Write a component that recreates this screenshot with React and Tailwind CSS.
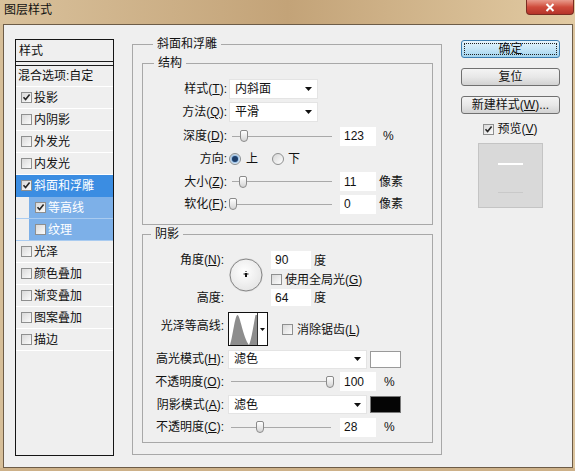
import React from 'react';

function U({ children }) {
  return <span className="underline underline-offset-[1px]">{children}</span>;
}

function Check({ checked }) {
  return (
    <span className="flex h-[11px] w-[11px] shrink-0 items-center justify-center border border-[#8e8f8f] bg-linear-to-br from-[#d9d9d9] to-[#fbfbfb]">
      {checked && (
        <svg width="9" height="9" viewBox="0 0 9 9">
          <path d="M1.5 4.3 L3.6 6.6 L7.6 1.6" fill="none" stroke="#262626" strokeWidth="1.6" />
        </svg>
      )}
    </span>
  );
}

function Radio({ checked }) {
  return (
    <span className="flex h-[12px] w-[12px] shrink-0 items-center justify-center rounded-full border border-[#8e8f8f] bg-linear-to-br from-[#d6d6d6] to-white">
      {checked && <span className="h-[6px] w-[6px] rounded-full bg-[#1f3f6a] shadow-[0_0_2px_1px_#78b0e6]" />}
    </span>
  );
}

function Arrow() {
  return (
    <svg width="7" height="4" viewBox="0 0 7 4">
      <path d="M0 0 H7 L3.5 4 Z" fill="#111" />
    </svg>
  );
}

function Select({ value, className }) {
  return (
    <div className={`flex items-center justify-between border border-[#e4e4e4] bg-white pl-[5px] pr-[5px] ${className}`}>
      <span>{value}</span>
      <Arrow />
    </div>
  );
}

function Slider({ left }) {
  return (
    <div className="relative flex h-[12px] w-[107px] shrink-0 items-center">
      <div className="ml-[3px] h-px w-[100px] bg-[#a9a9a9]" />
      <div
        className="absolute top-0 h-[12px] w-[8px] rounded-t-[2px] rounded-b-[4px] border border-[#8a8a8a] bg-linear-to-b from-white to-[#d4d4d4]"
        style={{ left }}
      />
    </div>
  );
}

function Field({ value, className }) {
  return <div className={`flex items-center bg-white pl-[4px] ${className}`}>{value}</div>;
}

const effects = [
  { name: '投影', checked: true },
  { name: '内阴影' },
  { name: '外发光' },
  { name: '内发光' },
  { name: '斜面和浮雕', checked: true, selected: true },
  { name: '等高线', checked: true, sub: true },
  { name: '纹理', sub: true },
  { name: '光泽' },
  { name: '颜色叠加' },
  { name: '渐变叠加' },
  { name: '图案叠加' },
  { name: '描边' },
];

function EffectList() {
  return (
    <div className="ml-[11px] mt-[14px] flex h-[417px] w-[99px] shrink-0 flex-col border border-[#141414]">
      <div className="flex h-[22px] items-center border-b border-[#1c1c1c] pl-[3px]">样式</div>
      <div className="h-[3px]" />
      <div className="flex h-[22px] items-center border-t border-b border-t-[#1c1c1c] border-b-white pl-[2px]">混合选项:自定</div>
      {effects.map((e) =>
        e.sub ? (
          <div key={e.name} className="flex h-[22px] border-b border-[#a9cbf0] pl-[13px]">
            <div className="flex flex-1 items-center gap-[2px] bg-[#7db0e8] pl-[6px] text-white">
              <Check checked={e.checked} />
              {e.name}
            </div>
          </div>
        ) : (
          <div
            key={e.name}
            className={`flex h-[22px] items-center gap-[2px] border-b pl-[5px] ${
              e.selected ? 'border-[#3b8de2] bg-[#3b8de2] text-white' : 'border-white'
            }`}
          >
            <Check checked={e.checked} />
            {e.name}
          </div>
        )
      )}
    </div>
  );
}

function Structure() {
  return (
    <fieldset className="border border-[#a8a8a8] pb-[9px] pt-[7px]">
      <legend className="ml-[11px] px-[4px] leading-[14px]">结构</legend>
      <div className="flex h-[23px] items-center">
        <div className="w-[84px] text-right">样式(<U>T</U>):</div>
        <Select value="内斜面" className="ml-[2px] h-[20px] w-[89px]" />
      </div>
      <div className="flex h-[24px] items-center">
        <div className="w-[84px] text-right">方法(<U>Q</U>):</div>
        <Select value="平滑" className="ml-[2px] h-[20px] w-[89px]" />
      </div>
      <div className="flex h-[24px] items-center">
        <div className="w-[84px] text-right">深度(<U>D</U>):</div>
        <div className="ml-[2px]"><Slider left={11} /></div>
        <Field value="123" className="ml-[4px] h-[19px] w-[36px]" />
        <span className="ml-[7px]">%</span>
      </div>
      <div className="flex h-[22px] items-center">
        <div className="w-[84px] text-right">方向:</div>
        <div className="ml-[2px] flex items-center">
          <Radio checked />
          <span className="ml-[5px]">上</span>
          <span className="ml-[14px]"><Radio /></span>
          <span className="ml-[4px]">下</span>
        </div>
      </div>
      <div className="flex h-[23px] items-center">
        <div className="w-[84px] text-right">大小(<U>Z</U>):</div>
        <div className="ml-[2px]"><Slider left={10} /></div>
        <Field value="11" className="ml-[4px] h-[19px] w-[36px]" />
        <span className="ml-[3px]">像素</span>
      </div>
      <div className="flex h-[22px] items-center">
        <div className="w-[84px] text-right">软化(<U>F</U>):</div>
        <div className="ml-[2px]"><Slider left={0} /></div>
        <Field value="0" className="ml-[4px] h-[19px] w-[36px]" />
        <span className="ml-[3px]">像素</span>
      </div>
    </fieldset>
  );
}

function AngleDial() {
  return (
    <svg width="36" height="36" viewBox="0 0 36 36">
      <defs>
        <radialGradient id="dial" cx="0.45" cy="0.4" r="0.6">
          <stop offset="0" stopColor="#ffffff" />
          <stop offset="1" stopColor="#e6e6e6" />
        </radialGradient>
      </defs>
      <circle cx="18" cy="18" r="17" fill="#d8d8d8" opacity="0.5" />
      <circle cx="18" cy="18" r="16" fill="url(#dial)" stroke="#858585" strokeWidth="1" />
      <rect x="17.5" y="14" width="1" height="1" fill="#111" />
      <rect x="15.5" y="16.5" width="5" height="1" fill="#111" />
      <rect x="17" y="16" width="2" height="4" fill="#111" />
    </svg>
  );
}

function ContourThumb() {
  return (
    <svg width="40" height="34" viewBox="0 0 40 34">
      <rect x="0.5" y="0.5" width="39" height="33" fill="#fff" stroke="#111" />
      <path d="M2 33 C5 24 7 3 9.5 3 C12 3 15 25 21 33 Z" fill="#8d8d8d" />
      <path d="M21 33 C23.5 28 26 10 27.5 3 L29 3 L29 33 Z" fill="#8d8d8d" />
      <line x1="29.5" y1="1" x2="29.5" y2="33" stroke="#333" />
      <path d="M32 16 H37 L34.5 19 Z" fill="#111" />
    </svg>
  );
}

function Shadow() {
  return (
    <fieldset className="mt-[2px] border border-[#a8a8a8] pb-[4px] pt-[10px]">
      <legend className="ml-[8px] px-[4px] leading-[14px]">阴影</legend>
      <div className="flex">
        <div className="flex w-[81px] flex-col justify-between text-right">
          <div className="leading-[19px]">角度(<U>N</U>):</div>
          <div className="leading-[18px]">高度:</div>
        </div>
        <div className="ml-[4px] mt-[6px]">
          <AngleDial />
        </div>
        <div className="ml-[7px] flex flex-col">
          <div className="flex h-[19px] items-center">
            <Field value="90" className="h-[18px] w-[40px] self-start" />
            <span className="ml-[3px]">度</span>
          </div>
          <div className="flex h-[19px] items-center gap-[3px]">
            <Check />
            <span>使用全局光(<U>G</U>)</span>
          </div>
          <div className="flex h-[18px] items-center">
            <Field value="64" className="h-[17px] w-[40px] self-start" />
            <span className="ml-[3px]">度</span>
          </div>
        </div>
      </div>
      <div className="mt-[5px] flex h-[34px]">
        <div className="w-[81px] pt-[7px] text-right">光泽等高线:</div>
        <div className="ml-[4px]">
          <ContourThumb />
        </div>
        <div className="ml-[14px] flex items-center gap-[4px] pt-[1px]">
          <Check />
          <span>消除锯齿(<U>L</U>)</span>
        </div>
      </div>
      <div className="mt-[2px] flex h-[22px] items-center">
        <div className="w-[81px] text-right">高光模式(<U>H</U>):</div>
        <Select value="滤色" className="ml-[4px] h-[19px] w-[139px]" />
        <div className="ml-[3px] h-[17px] w-[31px] border border-[#9a9a9a] bg-white" />
      </div>
      <div className="flex h-[23px] items-center">
        <div className="w-[81px] text-right">不透明度(<U>O</U>):</div>
        <div className="ml-[4px]"><Slider left={98} /></div>
        <Field value="100" className="ml-[5px] h-[19px] w-[36px]" />
        <span className="ml-[8px]">%</span>
      </div>
      <div className="flex h-[23px] items-center">
        <div className="w-[81px] text-right">阴影模式(<U>A</U>):</div>
        <Select value="滤色" className="ml-[4px] h-[19px] w-[139px]" />
        <div className="ml-[3px] h-[17px] w-[31px] border border-[#7a7a7a] bg-[#050505]" />
      </div>
      <div className="flex h-[22px] items-center">
        <div className="w-[81px] text-right">不透明度(<U>C</U>):</div>
        <div className="ml-[4px]"><Slider left={28} /></div>
        <Field value="28" className="ml-[5px] h-[19px] w-[36px]" />
        <span className="ml-[8px]">%</span>
      </div>
    </fieldset>
  );
}

function Buttons() {
  return (
    <div className="ml-[19px] mt-[15px] flex w-[99px] flex-col items-center">
      <button className="flex h-[18px] w-full items-center justify-center rounded-[3px] border border-[#3c7fb1] bg-linear-to-b from-[#e8f5fc] via-[#c6e6f7] to-[#a2d4ef] p-[2px]">
        <span className="flex h-full w-full items-center justify-center border border-dotted border-[#222]">确定</span>
      </button>
      <button className="mt-[10px] flex h-[18px] w-full items-center justify-center rounded-[3px] border border-[#707070] bg-linear-to-b from-[#f4f4f4] via-[#e8e8e8] to-[#d2d2d2]">
        复位
      </button>
      <button className="mt-[10px] flex h-[18px] w-full items-center justify-center rounded-[3px] border border-[#707070] bg-linear-to-b from-[#f4f4f4] via-[#e8e8e8] to-[#d2d2d2]">
        新建样式(<U>W</U>)...
      </button>
      <div className="mt-[9px] flex h-[12px] items-center gap-[3px]">
        <Check checked />
        <span>预览(<U>V</U>)</span>
      </div>
      <div className="mt-[8px] flex h-[65px] w-[65px] flex-col items-center border border-[#c4c4c4] bg-[#d9d9d9] pt-[19px]">
        <div className="h-[2px] w-[25px] bg-white" />
        <div className="mt-[27px] h-px w-[25px] bg-[#c9c9c9]" />
      </div>
    </div>
  );
}

export default function App() {
  return (
    <div className="flex h-[471px] w-[575px] flex-col overflow-hidden bg-[#d4bb93] font-['Liberation_Sans','Noto_Sans_CJK_SC',sans-serif] text-[12px] leading-[14px] text-[#111]">
      <div className="flex h-[24px] items-start justify-between bg-linear-to-r from-[#d9c19b] via-[#c3a378] to-[#e2cba3]">
        <div className="pl-[4px] pt-[3px]">图层样式</div>
        <div className="mr-[1px] flex h-[15px] w-[48px] items-center justify-center rounded-b-[4px] border border-t-0 border-[#7a2c22] bg-linear-to-b from-[#e89a8c] via-[#cf4b3c] to-[#b5342a]">
          <svg width="10" height="9" viewBox="0 0 10 9">
            <path d="M1.5 1 L8.5 8 M8.5 1 L1.5 8" stroke="#fff" strokeWidth="2" />
          </svg>
        </div>
      </div>
      <div className="flex h-[444px]">
        <div className="w-[3px] bg-[#d6be98]" />
        <div className="flex w-[570px] border border-[#6d5c47] bg-[#efefef]">
          <EffectList />
          <fieldset className="ml-[18px] mt-[12px] h-[418px] w-[310px] shrink-0 border border-[#a8a8a8] pl-[9px] pr-[8px] pt-[5px]">
            <legend className="ml-[11px] px-[4px] leading-[14px]">斜面和浮雕</legend>
            <Structure />
            <Shadow />
          </fieldset>
          <Buttons />
        </div>
        <div className="w-[2px] bg-[#dcc59f]" />
      </div>
      <div className="h-[3px] bg-[#cdb189]" />
    </div>
  );
}
